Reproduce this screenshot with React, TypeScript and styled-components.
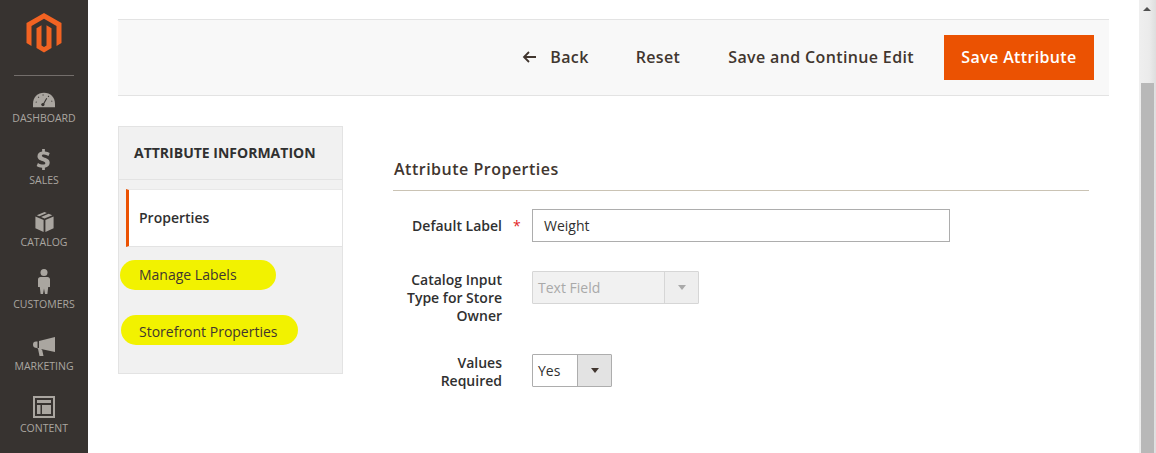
import React from "react";
import styled, { createGlobalStyle } from "styled-components";

const GlobalStyle = createGlobalStyle`
  html, body {
    margin: 0;
    padding: 0;
    background: #fff;
    overflow: hidden;
  }
  body {
    font-family: "Open Sans", "Liberation Sans", sans-serif;
    color: #303030;
  }
`;

const Page = styled.div`
  display: flex;
  width: 1156px;
  height: 453px;
  overflow: hidden;
`;

const Sidebar = styled.nav`
  flex: 0 0 88px;
  background: #373330;
  display: flex;
  flex-direction: column;
  align-items: center;
  overflow: hidden;
`;

const LogoBox = styled.div`
  height: 76px;
  width: 60px;
  box-sizing: border-box;
  padding-top: 13px;
  display: flex;
  justify-content: center;
  border-bottom: 1px solid #736e6b;
  flex: none;
`;

const NavItem = styled.div`
  flex: none;
  height: 62px;
  display: flex;
  flex-direction: column;
  align-items: center;
  justify-content: flex-end;
  color: #aaa6a0;
  font-size: 10.5px;
  line-height: 14px;
  &:nth-child(2) {
    height: 49px;
  }
`;

const NavIcon = styled.div`
  height: 28px;
  padding-bottom: 3px;
  box-sizing: border-box;
  display: flex;
  align-items: flex-end;
  justify-content: center;
`;

const Main = styled.main`
  flex: 1;
  min-width: 0;
  padding: 19px 47px 0 30px;
`;

const ActionBar = styled.header`
  height: 77px;
  box-sizing: border-box;
  background: #f8f8f8;
  border-top: 1px solid #e3e3e3;
  border-bottom: 1px solid #e3e3e3;
  display: flex;
  align-items: center;
  justify-content: flex-end;
  padding-right: 15px;
  gap: 47px;
`;

const ActionLink = styled.span<{ $after?: number }>`
  font-size: 16px;
  font-weight: 600;
  letter-spacing: 0.36px;
  color: #41362f;
  display: flex;
  align-items: center;
  gap: 14px;
  padding-bottom: 2px;
  margin-right: ${(p) => p.$after ?? 0}px;
`;

const PrimaryButton = styled.button`
  border: 0;
  background: #eb5202;
  color: #fff;
  font-family: inherit;
  font-size: 16px;
  font-weight: 600;
  letter-spacing: 0.36px;
  width: 150px;
  height: 45px;
  padding: 0 0 2px;
  margin-left: -17px;
`;

const Content = styled.div`
  display: flex;
  padding-top: 30px;
`;

const Tabs = styled.aside`
  flex: 0 0 225px;
  height: 248px;
  box-sizing: border-box;
  background: #f1f1f1;
  border: 1px solid #e3e3e3;
`;

const TabsTitle = styled.h3`
  margin: 0;
  height: 53px;
  box-sizing: border-box;
  padding: 0 15px 2px;
  display: flex;
  align-items: center;
  font-size: 14px;
  font-weight: 700;
  color: #303030;
  border-bottom: 1px solid #e3e3e3;
`;

const TabActive = styled.div`
  margin: 9px 0 0 7px;
  height: 58px;
  box-sizing: border-box;
  background: #fff;
  border-top: 1px solid #e8e8e8;
  border-left: 3px solid #eb5202;
  border-bottom: 1px solid #e3e3e3;
  padding: 0 0 2px 10px;
  display: flex;
  align-items: center;
  font-size: 14px;
  font-weight: 600;
  color: #303030;
`;

const Highlight = styled.div<{ $width: number; $left: number; $top: number; $shift: number }>`
  width: ${(p) => p.$width}px;
  height: 30px;
  margin: ${(p) => p.$top}px 0 0 ${(p) => p.$left}px;
  box-sizing: border-box;
  padding-left: ${(p) => 20 - p.$left}px;
  padding-top: ${(p) => (p.$shift > 0 ? p.$shift : 0)}px;
  padding-bottom: ${(p) => (p.$shift < 0 ? -p.$shift : 0)}px;
  background: #f2f200;
  border-radius: 15px;
  display: flex;
  align-items: center;
  font-size: 14px;
  color: #41362f;
`;

const FormArea = styled.section`
  flex: 1;
  min-width: 0;
  padding: 30px 20px 0 50px;
`;

const SectionTitle = styled.h2`
  margin: 0;
  height: 35px;
  box-sizing: border-box;
  padding: 1px 0 0 1px;
  border-bottom: 1px solid #cac3b4;
  font-size: 16px;
  font-weight: 600;
  letter-spacing: 0.5px;
  line-height: 24px;
  color: #41362f;
`;

const Field = styled.div<{ $top: number }>`
  display: flex;
  align-items: flex-start;
  margin-top: ${(p) => p.$top}px;
`;

const FieldLabel = styled.label<{ $inset?: boolean }>`
  flex: 0 0 109px;
  box-sizing: border-box;
  text-align: right;
  font-size: 14px;
  font-weight: 600;
  line-height: 18px;
  color: #303030;
  padding-top: ${(p) => (p.$inset ? 8 : 0)}px;
`;

const Required = styled.span<{ $on?: boolean }>`
  flex: 0 0 30px;
  box-sizing: border-box;
  padding: 8px 0 0 11px;
  font-size: 14px;
  line-height: 18px;
  color: #e22626;
  visibility: ${(p) => (p.$on ? "visible" : "hidden")};
`;

const TextInput = styled.div`
  width: 418px;
  height: 33px;
  box-sizing: border-box;
  border: 1px solid #adadad;
  background: #fff;
  padding-left: 11px;
  font-size: 14px;
  line-height: 31px;
  color: #303030;
`;

const Select = styled.div<{ $width: number; $disabled?: boolean }>`
  width: ${(p) => p.$width}px;
  height: 33px;
  box-sizing: border-box;
  border: 1px solid ${(p) => (p.$disabled ? "#d6d6d6" : "#adadad")};
  border-radius: 1px;
  background: ${(p) => (p.$disabled ? "#f1f1f1" : "#fff")};
  color: ${(p) => (p.$disabled ? "#a9a9a9" : "#303030")};
  display: flex;
  font-size: 14px;
  line-height: 31px;
  padding-left: 5px;
`;

const SelectValue = styled.span`
  flex: 1;
`;

const SelectButton = styled.span<{ $disabled?: boolean }>`
  flex: 0 0 34px;
  box-sizing: border-box;
  border-left: 1px solid ${(p) => (p.$disabled ? "#d6d6d6" : "#adadad")};
  background: ${(p) => (p.$disabled ? "#eeeeee" : "#e3e3e3")};
  display: flex;
  align-items: center;
  justify-content: center;
  &::after {
    content: "";
    border-style: solid;
    border-width: 5px 4px 0;
    border-color: ${(p) => (p.$disabled ? "#a9a9a9" : "#41362f")} transparent transparent;
  }
`;

const ScrollTrack = styled.div`
  position: absolute;
  top: 0;
  right: 0;
  width: 17px;
  height: 453px;
  background: linear-gradient(90deg, #efefef, #ebebeb 60%, #dedede);
`;

const ScrollThumb = styled.div`
  position: absolute;
  top: 83px;
  left: 2px;
  width: 13px;
  height: 370px;
  background: #b8b8b8;
`;

const ScrollArrow = styled.div`
  position: absolute;
  top: 7px;
  left: 4px;
  border-style: solid;
  border-width: 0 4px 4px;
  border-color: transparent transparent #505050;
`;

const MagentoLogo = () => (
  <svg width="36" height="40" viewBox="0 0 36 40">
    <path
      fill="#f26322"
      d="M18 0 35.5 10v20l-5 2.900V12.900L18 5.700 5.500 12.900V32.900L.5 30V10zM20.500 12.300 25.500 15.200V35L18 39.500 10.500 35V15.200l5-2.900V32.400L18 33.900l2.500-1.500z"
    />
  </svg>
);

const GaugeIcon = () => (
  <svg width="22" height="16" viewBox="0 0 24 16">
    <path fill="#aaa6a0" d="M0 16v-4C0 5 5 0 12 0s12 5 12 12v4z" />
    <g stroke="#373330" strokeWidth="1.200" fill="none">
      <path d="M4 10.500l-1-.4M6.500 5.500l-.8-.8M11 3.200V2M16.500 4.500l.8-1M20 9.500l1-.5" />
      <path d="M10.500 14 15 6" />
    </g>
    <circle cx="10.800" cy="13" r="1.800" fill="#373330" />
  </svg>
);

const DollarIcon = () => (
  <svg width="15" height="21" viewBox="0 0 16 23">
    <path
      fill="#aaa6a0"
      d="M6.500 0h3v2.700c2 .2 3.900.8 5.300 1.700l-1.300 3.200c-1.600-.9-3.300-1.500-5-1.500-1.600 0-2.300.6-2.300 1.400 0 1 1.200 1.400 3.100 2.100 3 1 5.500 2.200 5.500 5.500 0 2.800-2 4.800-5.300 5.300V23h-3v-2.500c-2.300-.2-4.400-.9-6-2l1.400-3.300c1.800 1.100 3.800 1.900 5.600 1.900 1.700 0 2.500-.6 2.500-1.600 0-1.100-1.200-1.600-3.200-2.300C3.900 12.200 1.400 11 1.400 7.900c0-2.700 2-4.600 5.100-5.100z"
    />
  </svg>
);

const BoxIcon = () => (
  <svg width="19" height="20" viewBox="0 0 20 22">
    <path
      fill="#aaa6a0"
      d="M10 0l2.600 1-8.300 3.700L1.500 3.600zM14.600 1.800l4 1.700-8.600 3.600-3.800-1.600zM0 5l9 3.700V22L0 18zM20 5v13l-9 4V8.700z"
    />
  </svg>
);

const PersonIcon = () => (
  <svg width="12" height="25" viewBox="0 0 12 25">
    <circle cx="6" cy="3.500" r="3.500" fill="#aaa6a0" />
    <path
      fill="#aaa6a0"
      d="M2.500 8h7C11 8 12 9 12 10.500V18h-1.800l-.8 7H7l-1-5.500L5 25H2.600l-.8-7H0v-7.500C0 9 1 8 2.500 8z"
    />
  </svg>
);

const MegaphoneIcon = () => (
  <svg width="22" height="19" viewBox="0 0 22 19">
    <path
      fill="#aaa6a0"
      d="M22 0v15L8 12l1.200 1 1.300 6H6.500L5 11.800 4 11c-2.400 0-4-.9-4-3.300C0 5.700 1 4.500 3 4.500h1.500V11H6V4z"
    />
  </svg>
);

const LayoutIcon = () => (
  <svg width="22" height="22" viewBox="0 0 22 22">
    <path
      fill="#aaa6a0"
      fillRule="evenodd"
      d="M0 0h22v22H0zM2 2v18h18V2zM4 4h14v3H4zM4 9h3.500v9H4zM9 9h9v9H9z"
    />
  </svg>
);

const BackArrow = () => (
  <svg width="14" height="12" viewBox="0 0 14 12">
    <path fill="none" stroke="#41362f" strokeWidth="1.800" d="M14 6H2M7 1 2 6l5 5" />
  </svg>
);

const navItems = [
  { label: "DASHBOARD", icon: <GaugeIcon /> },
  { label: "SALES", icon: <DollarIcon /> },
  { label: "CATALOG", icon: <BoxIcon /> },
  { label: "CUSTOMERS", icon: <PersonIcon /> },
  { label: "MARKETING", icon: <MegaphoneIcon /> },
  { label: "CONTENT", icon: <LayoutIcon /> },
];

const App = () => {
  return (
    <Page>
      <GlobalStyle />
      <Sidebar>
        <LogoBox>
          <MagentoLogo />
        </LogoBox>
        {navItems.map((item) => (
          <NavItem key={item.label}>
            <NavIcon>{item.icon}</NavIcon>
            {item.label}
          </NavItem>
        ))}
      </Sidebar>
      <Main>
        <ActionBar>
          <ActionLink>
            <BackArrow />
            Back
          </ActionLink>
          <ActionLink $after={1}>Reset</ActionLink>
          <ActionLink>Save and Continue Edit</ActionLink>
          <PrimaryButton>Save Attribute</PrimaryButton>
        </ActionBar>
        <Content>
          <Tabs>
            <TabsTitle>ATTRIBUTE INFORMATION</TabsTitle>
            <TabActive>Properties</TabActive>
            <Highlight $width={156} $left={1} $top={13} $shift={-2}>Manage Labels</Highlight>
            <Highlight $width={177} $left={2} $top={25} $shift={2}>Storefront Properties</Highlight>
          </Tabs>
          <FormArea>
            <SectionTitle>Attribute Properties</SectionTitle>
            <Field $top={18}>
              <FieldLabel $inset>Default Label</FieldLabel>
              <Required $on>*</Required>
              <TextInput>Weight</TextInput>
            </Field>
            <Field $top={29}>
              <FieldLabel>Catalog Input Type for Store Owner</FieldLabel>
              <Required />
              <Select $width={167} $disabled>
                <SelectValue>Text Field</SelectValue>
                <SelectButton $disabled />
              </Select>
            </Field>
            <Field $top={29}>
              <FieldLabel>Values Required</FieldLabel>
              <Required />
              <Select $width={80}>
                <SelectValue>Yes</SelectValue>
                <SelectButton />
              </Select>
            </Field>
          </FormArea>
        </Content>
      </Main>
      <ScrollTrack>
        <ScrollArrow />
        <ScrollThumb />
      </ScrollTrack>
    </Page>
  );
};

export default App;
